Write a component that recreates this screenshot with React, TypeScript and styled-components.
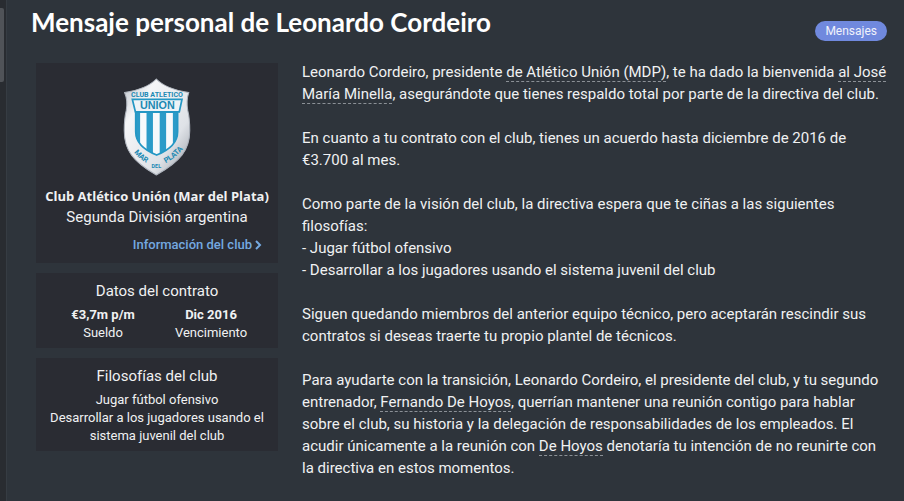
import React from "react";
import styled, { createGlobalStyle } from "styled-components";

const GlobalStyle = createGlobalStyle`
  * { box-sizing: border-box; }
  body {
    margin: 0;
    background: #2e343b;
    color: #f0f1f2;
    font-family: Roboto, "Liberation Sans", sans-serif;
  }
`;

const Page = styled.div`
  display: flex;
  min-height: 100vh;
`;

const ScrollRail = styled.div`
  flex: 0 0 7px;
  padding-top: 8px;
  background: #292c31;
  border-right: 1px solid #363c43;
`;

const ScrollThumb = styled.div`
  width: 4px;
  height: 74px;
  border-radius: 0 2px 2px 0;
  background: #505358;
`;

const Main = styled.main`
  flex: 1;
  min-width: 0;
  padding: 6px 17px 0 24px;
`;

const Header = styled.header`
  display: flex;
  align-items: flex-start;
  justify-content: space-between;
`;

const Title = styled.h1`
  margin: 0;
  font-family: Lato, Roboto, sans-serif;
  font-size: 26px;
  line-height: 32px;
  font-weight: 700;
  color: #ffffff;
`;

const Tag = styled.button`
  margin: 15px 0 0;
  padding: 0 10px;
  border: 0;
  border-radius: 10px;
  background: #7089de;
  color: #f0f2fb;
  font-family: inherit;
  font-size: 12px;
  line-height: 20px;
`;

const Content = styled.div`
  display: flex;
  align-items: flex-start;
  gap: 24px;
  padding: 20px 0 0 5px;
`;

const Sidebar = styled.aside`
  flex: 0 0 242px;
  display: flex;
  flex-direction: column;
  gap: 10px;
  padding-top: 2px;
`;

const Card = styled.section<{ $bottom: number }>`
  display: flex;
  flex-direction: column;
  padding: 8px 8px ${(p) => p.$bottom}px;
  background: #2a2c33;
  text-align: center;
`;

const Crest = styled.svg`
  align-self: center;
  width: 68px;
  height: 98px;
  margin: 7px 0 10px;
`;

const ClubName = styled.h2`
  margin: 0;
  font-family: "Open Sans", Roboto, sans-serif;
  font-size: 13px;
  line-height: 21px;
  font-weight: 700;
  white-space: nowrap;
`;

const Division = styled.p`
  margin: 0;
  font-size: 15px;
  line-height: 20px;
`;

const ClubLink = styled.a`
  display: flex;
  align-items: center;
  align-self: flex-end;
  gap: 3px;
  margin: 8px 8px 0 0;
  color: #74a9e0;
  font-size: 13px;
  line-height: 20px;
  font-weight: 500;
  text-decoration: none;
`;

const CardTitle = styled.h2`
  margin: 0 0 5px;
  font-size: 15px;
  line-height: 20px;
  font-weight: 400;
`;

const Facts = styled.dl`
  display: grid;
  grid-template-columns: 1fr 1fr;
  margin: 0 5px;
  font-size: 13px;
  line-height: 18px;
`;

const Fact = styled.div`
  display: flex;
  flex-direction: column-reverse;
`;

const FactLabel = styled.dt``;

const FactValue = styled.dd`
  margin: 0;
  font-weight: 700;
`;

const Philosophy = styled.p`
  margin: 0;
  font-size: 13px;
  line-height: 18px;
`;

const Message = styled.article`
  flex: 1;
  min-width: 0;
  font-size: 15px;
  line-height: 22px;
`;

const Paragraph = styled.p`
  margin: 0 0 22px;
`;

const TextLink = styled.a`
  color: inherit;
  text-decoration: none;
  border-bottom: 1px dashed #8b9096;
`;

const Shield = () => (
  <Crest viewBox="40 25 200 290" role="img" aria-label="Club Atlético Unión, Mar del Plata">
    <defs>
      <linearGradient id="silver" x1="0" y1="0" x2="1" y2="1">
        <stop offset="0" stopColor="#b9c0c8" />
        <stop offset="0.25" stopColor="#f5f6f8" />
        <stop offset="0.7" stopColor="#dfe2e7" />
        <stop offset="1" stopColor="#969ca5" />
      </linearGradient>
      <clipPath id="field">
        <path d="M77 126H201V184C201 215 179 237 139 253C99 237 77 215 77 184Z" />
      </clipPath>
      <path id="arcMar" d="M66 237Q87 268 118 280" />
      <path id="arcPlata" d="M158 281Q195 264 222 228" />
    </defs>
    <path
      d="M138 28Q166 57 234 68Q226 91 231 121Q237 145 237 180C237 239 208 272 138 312C69 272 43 239 43 180Q43 145 49 121Q54 91 44 68Q110 57 138 28Z"
      fill="url(#silver)"
      stroke="#aeb4bd"
      strokeWidth="3"
    />
    <path d="M67 88H214L206 125H76Z" fill="#eef3f7" stroke="#2497c4" strokeWidth="5" />
    <g clipPath="url(#field)">
      <path d="M77 124H201V256H77Z" fill="#f7f9fb" />
      <path d="M77 124H90V256H77ZM109 124H128V256H109ZM148 124H167V256H148ZM187 124H201V256H187Z" fill="#2b9bc8" />
    </g>
    <path d="M77 126H201V184C201 215 179 237 139 253C99 237 77 215 77 184Z" fill="none" stroke="#2497c4" strokeWidth="5" />
    <g fill="#2089b3" fontFamily="Roboto, Liberation Sans, sans-serif" textAnchor="middle" fontWeight="700">
      <text x="140" y="81" fontSize="21">CLUB ATLETICO</text>
      <text x="141" y="118" fontSize="32" fontFamily="Liberation Sans, sans-serif">UNION</text>
      <text fontSize="22"><textPath href="#arcMar" startOffset="50%">MAR</textPath></text>
      <text x="138" y="290" fontSize="16">DEL</text>
      <text fontSize="22"><textPath href="#arcPlata" startOffset="50%">PLATA</textPath></text>
    </g>
  </Crest>
);

const Chevron = () => (
  <svg width="7" height="10" viewBox="0 0 7 10" aria-hidden="true">
    <path d="M1 1L5 5L1 9" fill="none" stroke="currentColor" strokeWidth="2" />
  </svg>
);

export default function App() {
  return (
    <>
      <GlobalStyle />
      <Page>
        <ScrollRail><ScrollThumb /></ScrollRail>
        <Main>
          <Header>
            <Title>Mensaje personal de Leonardo Cordeiro</Title>
            <Tag type="button">Mensajes</Tag>
          </Header>
          <Content>
            <Sidebar>
              <Card $bottom={8}>
                <Shield />
                <ClubName>Club Atlético Unión (Mar del Plata)</ClubName>
                <Division>Segunda División argentina</Division>
                <ClubLink href="#club">Información del club<Chevron /></ClubLink>
              </Card>
              <Card $bottom={6}>
                <CardTitle>Datos del contrato</CardTitle>
                <Facts>
                  <Fact><FactLabel>Sueldo</FactLabel><FactValue>€3,7m p/m</FactValue></Fact>
                  <Fact><FactLabel>Vencimiento</FactLabel><FactValue>Dic 2016</FactValue></Fact>
                </Facts>
              </Card>
              <Card $bottom={6}>
                <CardTitle>Filosofías del club</CardTitle>
                <Philosophy>Jugar fútbol ofensivo</Philosophy>
                <Philosophy>Desarrollar a los jugadores usando el sistema juvenil del club</Philosophy>
              </Card>
            </Sidebar>
            <Message>
              <Paragraph>
                Leonardo Cordeiro, presidente <TextLink href="#union">de Atlético Unión (MDP)</TextLink>, te ha dado la bienvenida{" "}
                <TextLink href="#estadio">al José María Minella</TextLink>, asegurándote que tienes respaldo total por parte de la directiva del club.
              </Paragraph>
              <Paragraph>
                En cuanto a tu contrato con el club, tienes un acuerdo hasta diciembre de 2016 de<br />
                €3.700 al mes.
              </Paragraph>
              <Paragraph>
                Como parte de la visión del club, la directiva espera que te ciñas a las siguientes<br />
                filosofías:<br />
                - Jugar fútbol ofensivo<br />
                - Desarrollar a los jugadores usando el sistema juvenil del club
              </Paragraph>
              <Paragraph>
                Siguen quedando miembros del anterior equipo técnico, pero aceptarán rescindir sus<br />
                contratos si deseas traerte tu propio plantel de técnicos.
              </Paragraph>
              <Paragraph>
                Para ayudarte con la transición, Leonardo Cordeiro, el presidente del club, y tu segundo<br />
                entrenador, <TextLink href="#dehoyos">Fernando De Hoyos</TextLink>, querrían mantener una reunión contigo para hablar<br />
                sobre el club, su historia y la delegación de responsabilidades de los empleados. El<br />
                acudir únicamente a la reunión con <TextLink href="#dehoyos">De Hoyos</TextLink> denotaría tu intención de no reunirte con<br />
                la directiva en estos momentos.
              </Paragraph>
            </Message>
          </Content>
        </Main>
      </Page>
    </>
  );
}
